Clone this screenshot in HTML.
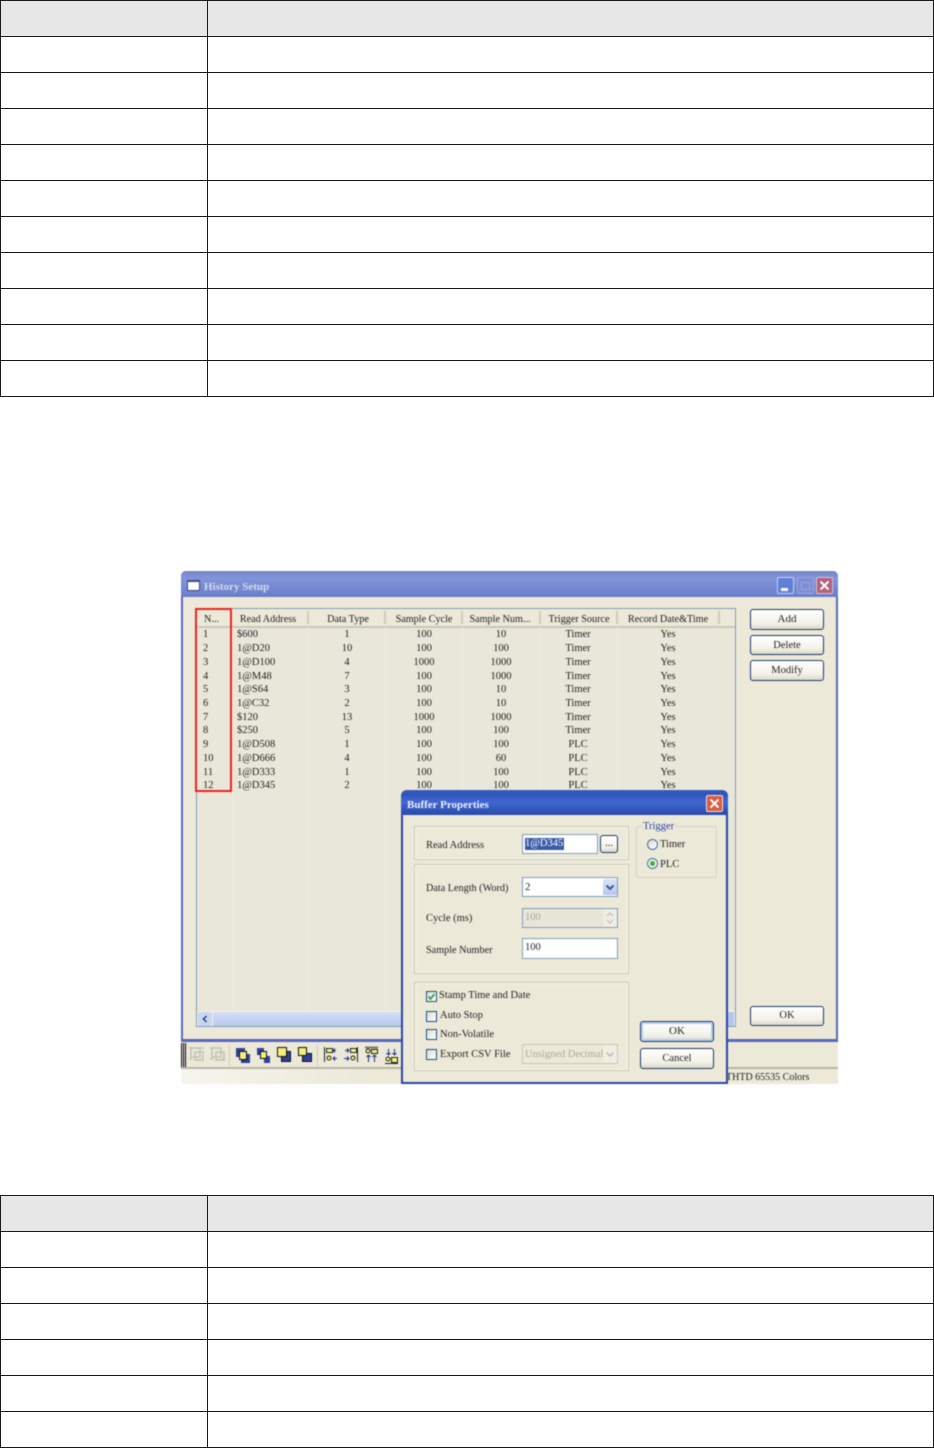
<!DOCTYPE html>
<html><head><meta charset="utf-8"><style>
html,body{margin:0;padding:0;background:#fff}
#p{position:relative;width:934px;height:1448px;overflow:hidden;background:#fff;font-family:"Liberation Serif",serif;font-size:10.5px;color:#222}
#p div{position:absolute}
.h{left:0;width:934px;height:1px;background:#1a1a1a}
.v{width:1px;background:#1a1a1a}
.t{white-space:nowrap;line-height:12px;height:12px;margin-top:1px}
.btn.t{margin-top:0}
.c{text-align:center;transform:translateX(-50%)}
.btn{border:1px solid #1f3a6e;border-radius:3px;background:linear-gradient(#fff,#f3f1e8 70%,#dcd8c8);text-align:center;color:#222;box-sizing:border-box}
.grp{border:1px solid #c9c6b3;box-sizing:border-box;box-shadow:inset 0 0 0 1px #f7f6ef}
.inp{background:#fff;border:1px solid #7f9db9;box-sizing:border-box}
.cb{width:11px;height:11px;border:1px solid #1c5180;background:linear-gradient(135deg,#dcdcd4,#fff);box-sizing:border-box}
.sep{top:611px;width:2px;height:13px;background:#d0ccb8}
#shot{filter:blur(.4px)}
#hd .t{font-size:10.2px}
</style></head><body><div id="p">

<!-- top table -->
<div style="left:0;top:0;width:934px;height:36px;background:#e7e7e7"></div>
<div class="h" style="top:0"></div><div class="h" style="top:36px"></div><div class="h" style="top:72px"></div><div class="h" style="top:108px"></div><div class="h" style="top:144px"></div><div class="h" style="top:180px"></div><div class="h" style="top:216px"></div><div class="h" style="top:252px"></div><div class="h" style="top:288px"></div><div class="h" style="top:324px"></div><div class="h" style="top:360px"></div><div class="h" style="top:396px"></div>
<div class="v" style="left:0;top:0;height:397px"></div><div class="v" style="left:207px;top:0;height:397px"></div><div class="v" style="left:933px;top:0;height:397px"></div>

<!-- bottom table -->
<div style="left:0;top:1195px;width:934px;height:36px;background:#e7e7e7"></div>
<div class="h" style="top:1195px"></div><div class="h" style="top:1231px"></div><div class="h" style="top:1267px"></div><div class="h" style="top:1303px"></div><div class="h" style="top:1339px"></div><div class="h" style="top:1375px"></div><div class="h" style="top:1411px"></div><div class="h" style="top:1447px"></div>
<div class="v" style="left:0;top:1195px;height:253px"></div><div class="v" style="left:207px;top:1195px;height:253px"></div><div class="v" style="left:933px;top:1195px;height:253px"></div>

<div id="shot" style="left:0;top:0;width:934px;height:1448px">
<!-- below-window area -->
<div style="left:181px;top:1041px;width:657px;height:43px;background:#ece9d8"></div>
<div style="left:181px;top:1067px;width:657px;height:2px;background:#b8b5a5"></div>
<div style="left:181px;top:1069px;width:657px;height:15px;background:linear-gradient(90deg,#f6f5ee,#ece9d8 30%)"></div>
<div class="t" style="left:726px;top:1071px;font-size:10px">THTD 65535 Colors</div>
<div style="left:181px;top:1043px;width:6px;height:24px;background:repeating-linear-gradient(90deg,#111 0 1px,#ddd 1px 2px)"></div>
<svg style="position:absolute;left:181px;top:1042px" width="225" height="26" viewBox="0 0 225 26">
<g fill="none" stroke="#c4c2b4" stroke-width="1.500"><rect x="10" y="6" width="9" height="9"/><rect x="14" y="10" width="8" height="8"/><path d="M8 6h3M8 17h3M20 6h3"/><rect x="31" y="6" width="9" height="9"/><rect x="35" y="10" width="8" height="8"/><path d="M29 6h3M29 17h3M41 17h3"/></g>
<path d="M48.500 3v21M136.500 3v21" stroke="#cfccba"/>
<g stroke="#111">
<rect x="55" y="6" width="9" height="9" fill="#2f3f9e" stroke="none"/><rect x="60" y="12" width="9" height="9" fill="#2f3f9e" stroke="none"/><rect x="58.500" y="9.500" width="7" height="8" fill="#f3ef78"/>
<rect x="76" y="6" width="7" height="7" fill="#2f3f9e" stroke="none"/><rect x="83" y="14" width="6" height="7" fill="#2f3f9e" stroke="none"/><rect x="79.500" y="9.500" width="6" height="7" fill="#f3ef78"/>
<rect x="100.500" y="9.500" width="9" height="10" fill="#2f3f9e"/><rect x="96.500" y="5.500" width="9" height="9" fill="#f3ef78"/>
<rect x="121.500" y="11.500" width="9" height="8" fill="#2f3f9e"/><rect x="117.500" y="5.500" width="8" height="8" fill="#f3ef78"/></g>
<g fill="none" stroke="#222">
<path d="M143.500 5v15"/><rect x="145.500" y="6.500" width="6" height="4" fill="#f3ef78"/><circle cx="148" cy="16" r="2" fill="#f3ef78"/><path d="M155 8.500h-3m0 0 2-2m-2 2 2 2M156 16.500h-4m0 0 2-2m-2 2 2 2" stroke="#1c2f8a"/>
<path d="M176.500 5v15"/><rect x="169.500" y="6.500" width="6" height="4" fill="#f3ef78"/><circle cx="172" cy="16" r="2" fill="#f3ef78"/><path d="M164 8.500h4m0 0-2-2m2 2-2 2M163 16.500h5m0 0-2-2m2 2-2 2" stroke="#1c2f8a"/>
<path d="M184 5.500h13" stroke="#777" stroke-width="2"/><circle cx="187" cy="9" r="2" fill="#f3ef78"/><rect x="190.500" y="7.500" width="6" height="4" fill="#f3ef78"/><path d="M187.500 20v-7m0 0-2 2m2-2 2 2M193.500 20v-7m0 0-2 2m2-2 2 2" stroke="#1c2f8a"/>
<path d="M204 21.500h13"/><circle cx="207" cy="17" r="2" fill="#f3ef78"/><rect x="210.500" y="15.500" width="6" height="5" fill="#f3ef78"/><path d="M207.500 7v6m0 0-2-2m2 2 2-2M213.500 7v6m0 0-2-2m2 2 2-2" stroke="#1c2f8a"/></g>
</svg>

<!-- History Setup window -->
<div style="left:181px;top:571px;width:657px;height:471px;background:#ece9d8;border:2px solid #5a68bd;border-top:none;border-bottom-width:3px;box-sizing:border-box;border-radius:5px 5px 0 0"></div>
<div style="left:181px;top:571px;width:657px;height:26px;border-radius:5px 5px 0 0;background:linear-gradient(#7d8a9e 0,#7688cf 2px,#8494d8 7px,#6d80cc 24px,#6a7cc8)"></div>
<div style="left:187px;top:580px;width:13px;height:11px;background:#fff;border:1px solid #3a4a8e;border-top-width:2px;box-sizing:border-box"></div>
<div class="t" style="left:204px;top:580px;font-weight:bold;color:#d6dbef;font-size:11px">History Setup</div>
<div style="left:777px;top:577px;width:17px;height:17px;background:#5f7fd8;border:1px solid #c8d0ee;border-radius:2px;box-sizing:border-box"></div>
<div style="left:781px;top:588px;width:7px;height:3px;background:#fff"></div>
<div style="left:797px;top:577px;width:17px;height:17px;background:#7e8ed2;border:1px solid #9aa6de;border-radius:2px;box-sizing:border-box"></div>
<div style="left:801px;top:582px;width:9px;height:8px;border:1px solid #98a5de;box-sizing:border-box"></div>
<div style="left:816px;top:577px;width:17px;height:17px;background:#b4607c;border:1px solid #d8c4d4;border-radius:2px;box-sizing:border-box"></div>
<svg style="position:absolute;left:816px;top:577px" width="17" height="17"><path d="M4.500 4.500l8 8M12.500 4.500l-8 8" stroke="#fff" stroke-width="2"/></svg>

<!-- list -->
<div style="left:196px;top:608px;width:540px;height:419px;background:#e9e7d9;border:1px solid #7f9db9;box-sizing:border-box"></div>
<div style="left:197px;top:609px;width:538px;height:17px;background:#ece9d8;border-bottom:2px solid #cbc7b8"></div>
<div class="sep" style="left:307px"></div><div class="sep" style="left:384px"></div><div class="sep" style="left:461px"></div><div class="sep" style="left:539px"></div><div class="sep" style="left:616px"></div><div class="sep" style="left:718px"></div>
<div style="left:232px;top:627px;width:1px;height:384px;background:#f0eee2"></div><div style="left:308px;top:627px;width:1px;height:384px;background:#f0eee2"></div><div style="left:385px;top:627px;width:1px;height:384px;background:#f0eee2"></div><div style="left:462px;top:627px;width:1px;height:384px;background:#f0eee2"></div><div style="left:539px;top:627px;width:1px;height:384px;background:#f0eee2"></div><div style="left:617px;top:627px;width:1px;height:384px;background:#f0eee2"></div>
<div id="hd" style="left:0;top:1px;width:934px;height:20px">
<div class="t" style="left:204px;top:612px">N...</div>
<div class="t c" style="left:268px;top:612px">Read Address</div><div class="t c" style="left:348px;top:612px">Data Type</div><div class="t c" style="left:424px;top:612px">Sample Cycle</div><div class="t c" style="left:500px;top:612px">Sample Num...</div><div class="t c" style="left:579px;top:612px">Trigger Source</div><div class="t c" style="left:668px;top:612px">Record Date&amp;Time</div>
</div>
<div style="left:0;top:1px;width:934px;height:20px">
<div class="t" style="left:203px;top:627px">1</div><div class="t" style="left:237px;top:627px">$600</div><div class="t c" style="left:347px;top:627px">1</div><div class="t c" style="left:424px;top:627px">100</div><div class="t c" style="left:501px;top:627px">10</div><div class="t c" style="left:578px;top:627px">Timer</div><div class="t c" style="left:668px;top:627px">Yes</div>
<div class="t" style="left:203px;top:641px">2</div><div class="t" style="left:237px;top:641px">1@D20</div><div class="t c" style="left:347px;top:641px">10</div><div class="t c" style="left:424px;top:641px">100</div><div class="t c" style="left:501px;top:641px">100</div><div class="t c" style="left:578px;top:641px">Timer</div><div class="t c" style="left:668px;top:641px">Yes</div>
<div class="t" style="left:203px;top:655px">3</div><div class="t" style="left:237px;top:655px">1@D100</div><div class="t c" style="left:347px;top:655px">4</div><div class="t c" style="left:424px;top:655px">1000</div><div class="t c" style="left:501px;top:655px">1000</div><div class="t c" style="left:578px;top:655px">Timer</div><div class="t c" style="left:668px;top:655px">Yes</div>
<div class="t" style="left:203px;top:669px">4</div><div class="t" style="left:237px;top:669px">1@M48</div><div class="t c" style="left:347px;top:669px">7</div><div class="t c" style="left:424px;top:669px">100</div><div class="t c" style="left:501px;top:669px">1000</div><div class="t c" style="left:578px;top:669px">Timer</div><div class="t c" style="left:668px;top:669px">Yes</div>
<div class="t" style="left:203px;top:682px">5</div><div class="t" style="left:237px;top:682px">1@S64</div><div class="t c" style="left:347px;top:682px">3</div><div class="t c" style="left:424px;top:682px">100</div><div class="t c" style="left:501px;top:682px">10</div><div class="t c" style="left:578px;top:682px">Timer</div><div class="t c" style="left:668px;top:682px">Yes</div>
<div class="t" style="left:203px;top:696px">6</div><div class="t" style="left:237px;top:696px">1@C32</div><div class="t c" style="left:347px;top:696px">2</div><div class="t c" style="left:424px;top:696px">100</div><div class="t c" style="left:501px;top:696px">10</div><div class="t c" style="left:578px;top:696px">Timer</div><div class="t c" style="left:668px;top:696px">Yes</div>
<div class="t" style="left:203px;top:710px">7</div><div class="t" style="left:237px;top:710px">$120</div><div class="t c" style="left:347px;top:710px">13</div><div class="t c" style="left:424px;top:710px">1000</div><div class="t c" style="left:501px;top:710px">1000</div><div class="t c" style="left:578px;top:710px">Timer</div><div class="t c" style="left:668px;top:710px">Yes</div>
<div class="t" style="left:203px;top:723px">8</div><div class="t" style="left:237px;top:723px">$250</div><div class="t c" style="left:347px;top:723px">5</div><div class="t c" style="left:424px;top:723px">100</div><div class="t c" style="left:501px;top:723px">100</div><div class="t c" style="left:578px;top:723px">Timer</div><div class="t c" style="left:668px;top:723px">Yes</div>
<div class="t" style="left:203px;top:737px">9</div><div class="t" style="left:237px;top:737px">1@D508</div><div class="t c" style="left:347px;top:737px">1</div><div class="t c" style="left:424px;top:737px">100</div><div class="t c" style="left:501px;top:737px">100</div><div class="t c" style="left:578px;top:737px">PLC</div><div class="t c" style="left:668px;top:737px">Yes</div>
<div class="t" style="left:203px;top:751px">10</div><div class="t" style="left:237px;top:751px">1@D666</div><div class="t c" style="left:347px;top:751px">4</div><div class="t c" style="left:424px;top:751px">100</div><div class="t c" style="left:501px;top:751px">60</div><div class="t c" style="left:578px;top:751px">PLC</div><div class="t c" style="left:668px;top:751px">Yes</div>
<div class="t" style="left:203px;top:765px">11</div><div class="t" style="left:237px;top:765px">1@D333</div><div class="t c" style="left:347px;top:765px">1</div><div class="t c" style="left:424px;top:765px">100</div><div class="t c" style="left:501px;top:765px">100</div><div class="t c" style="left:578px;top:765px">PLC</div><div class="t c" style="left:668px;top:765px">Yes</div>
<div class="t" style="left:203px;top:778px">12</div><div class="t" style="left:237px;top:778px">1@D345</div><div class="t c" style="left:347px;top:778px">2</div><div class="t c" style="left:424px;top:778px">100</div><div class="t c" style="left:501px;top:778px">100</div><div class="t c" style="left:578px;top:778px">PLC</div><div class="t c" style="left:668px;top:778px">Yes</div>
</div>

<!-- red box -->
<div style="left:195px;top:608px;width:37px;height:184px;border:2px solid #ee2028;box-sizing:border-box"></div>

<!-- scrollbar -->
<div style="left:197px;top:1011px;width:538px;height:15px;background:#f3f1e7"></div>
<div style="left:198px;top:1012px;width:14px;height:14px;background:#c9d6f0;border-radius:2px"></div>
<svg style="position:absolute;left:198px;top:1012px" width="14" height="14"><path d="M8.500 4l-3 3 3 3" fill="none" stroke="#2a3f78" stroke-width="1.500"/></svg>
<div style="left:213px;top:1012px;width:520px;height:14px;background:linear-gradient(#d6e0f6,#b9c9ee)"></div>
<div style="left:721px;top:1012px;width:13px;height:14px;background:#b4c6ee"></div>

<!-- right buttons -->
<div class="btn t" style="left:750px;top:609px;width:74px;height:21px;line-height:19px;font-size:11px">Add</div>
<div class="btn t" style="left:750px;top:635px;width:74px;height:20px;line-height:19px">Delete</div>
<div class="btn t" style="left:750px;top:660px;width:74px;height:21px;line-height:19px">Modify</div>
<div class="btn t" style="left:750px;top:1006px;width:74px;height:20px;line-height:18px">OK</div>

<!-- Buffer Properties dialog -->
<div style="left:401px;top:790px;width:327px;height:294px;background:#ece9d8;border:2px solid #2b45a5;border-top:none;box-sizing:border-box;border-radius:6px 6px 0 0"></div>
<div style="left:401px;top:790px;width:327px;height:25px;border-radius:6px 6px 0 0;background:linear-gradient(#3a5cc0,#2f54bb 4px,#3f68d0 12px,#2a49ac)"></div>
<div class="t" style="left:407px;top:798px;font-weight:bold;color:#eef1fa;font-size:11px">Buffer Properties</div>
<div style="left:706px;top:795px;width:17px;height:17px;background:#dc5a3e;border:1px solid #f0e6e0;border-radius:2px;box-sizing:border-box"></div>
<svg style="position:absolute;left:706px;top:795px" width="17" height="17"><path d="M4.500 4.500l8 8M12.500 4.500l-8 8" stroke="#fff" stroke-width="2"/></svg>

<div class="grp" style="left:414px;top:826px;width:215px;height:34px"></div>
<div class="grp" style="left:414px;top:864px;width:215px;height:110px"></div>
<div class="grp" style="left:414px;top:982px;width:215px;height:89px"></div>
<div style="left:636px;top:826px;width:81px;height:52px;border:1px solid #d4d0bf;border-radius:3px;box-sizing:border-box"></div>
<div class="t" style="left:642px;top:820px;padding:0 1px;background:#ece9d8;color:#2b45a5">Trigger</div>

<div class="t" style="left:426px;top:839px">Read Address</div>
<div class="inp" style="left:522px;top:834px;width:76px;height:20px"></div>
<div class="t" style="left:525px;top:837px;background:#3a5aa8;color:#fff;padding-right:1px">1@D345</div>
<div class="btn t" style="left:600px;top:835px;width:18px;height:18px;line-height:16px">...</div>

<div class="t" style="left:426px;top:882px;font-size:10.2px">Data Length (Word)</div>
<div class="inp" style="left:522px;top:877px;width:96px;height:20px"></div>
<div class="t" style="left:525px;top:880px;font-size:11px">2</div>
<div style="left:603px;top:879px;width:14px;height:16px;background:linear-gradient(#dbe4f8,#b5c6ee);border-radius:1px"></div>
<svg style="position:absolute;left:603px;top:879px" width="14" height="16"><path d="M3.500 6.500 7 10l3.500-3.500" fill="none" stroke="#3d5a92" stroke-width="2"/></svg>

<div class="t" style="left:426px;top:912px">Cycle (ms)</div>
<div class="inp" style="left:522px;top:908px;width:96px;height:20px;background:#e8e6d8"></div>
<div class="t" style="left:525px;top:911px;color:#a9a89c">100</div>
<div style="left:603px;top:909px;width:14px;height:18px;background:#f0eee4"></div>
<svg style="position:absolute;left:603px;top:909px" width="14" height="18"><path d="M4 7l3-3 3 3M4 11l3 3 3-3" fill="none" stroke="#b9b8ac"/></svg>

<div class="t" style="left:426px;top:944px;font-size:10.2px">Sample Number</div>
<div class="inp" style="left:522px;top:938px;width:96px;height:21px"></div>
<div class="t" style="left:525px;top:941px">100</div>

<div class="cb" style="left:426px;top:991px"></div>
<svg style="position:absolute;left:426px;top:991px" width="11" height="11"><path d="M2.500 5.500l2 2.500 4-5" fill="none" stroke="#2f9a3a" stroke-width="1.700"/></svg>
<div class="t" style="left:439px;top:989px">Stamp Time and Date</div>
<div class="cb" style="left:426px;top:1011px"></div><div class="t" style="left:440px;top:1009px">Auto Stop</div>
<div class="cb" style="left:426px;top:1029px"></div><div class="t" style="left:440px;top:1028px">Non-Volatile</div>
<div class="cb" style="left:426px;top:1049px"></div><div class="t" style="left:440px;top:1048px">Export CSV File</div>
<div style="left:522px;top:1044px;width:96px;height:20px;border:1px solid #c9c6b3;box-sizing:border-box;background:#ece9d8"></div>
<div class="t" style="left:525px;top:1048px;color:#a9a89c">Unsigned Decimal</div>
<div style="left:603px;top:1046px;width:14px;height:16px;background:#f0eee4"></div>
<svg style="position:absolute;left:603px;top:1046px" width="14" height="16"><path d="M3.500 6.500 7 10l3.500-3.500" fill="none" stroke="#b9b8ac" stroke-width="1.500"/></svg>

<div style="left:647px;top:839px;width:11px;height:11px;border:1px solid #4a6f98;border-radius:50%;background:linear-gradient(135deg,#dcdcd4,#fff);box-sizing:border-box"></div>
<div class="t" style="left:660px;top:838px">Timer</div>
<div style="left:647px;top:858px;width:11px;height:11px;border:1px solid #4a6f98;border-radius:50%;background:#f4f3ec;box-sizing:border-box"></div>
<div style="left:650px;top:861px;width:5px;height:5px;border-radius:50%;background:#3faa4a"></div>
<div class="t" style="left:660px;top:858px">PLC</div>

<div class="btn t" style="left:640px;top:1021px;width:74px;height:21px;line-height:19px;box-shadow:inset 0 0 0 2px #b8cdf0;font-size:11px">OK</div>
<div class="btn t" style="left:640px;top:1048px;width:74px;height:21px;line-height:20px">Cancel</div>
</div>
</div></body></html>
